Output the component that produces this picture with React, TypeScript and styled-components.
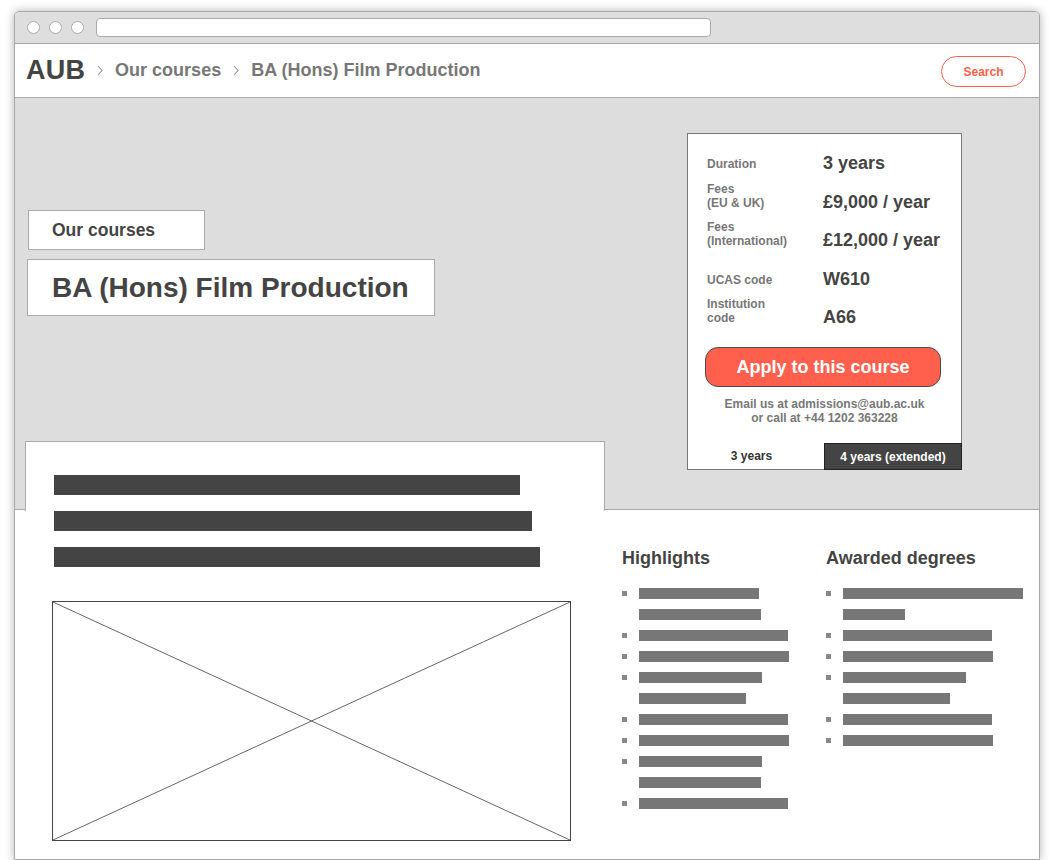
import React from "react";
import styled, { createGlobalStyle } from "styled-components";

const Global = createGlobalStyle`
  html, body { margin: 0; padding: 0; background: #ffffff; }
  body { font-family: "Liberation Sans", Arial, sans-serif; overflow: hidden; }
  * { box-sizing: border-box; }
`;

const Window = styled.div`
  margin: 11px 0 0 14px;
  width: 1026px;
  height: 849px;
  border: 1px solid #a8a8a8;
  border-radius: 5px 5px 0 0;
  box-shadow: 0 0 10px rgba(0, 0, 0, 0.3);
  background: #ffffff;
  overflow: hidden;
  display: flex;
  flex-direction: column;
`;

const Chrome = styled.div`
  height: 32px;
  flex: none;
  background: #dedede;
  border-bottom: 1px solid #a8a8a8;
  display: flex;
  align-items: center;
  padding-left: 12px;
  gap: 9px;
`;

const Dot = styled.span`
  width: 13px;
  height: 13px;
  border-radius: 50%;
  background: #ffffff;
  border: 1px solid #aaaaaa;
`;

const AddressBar = styled.div`
  margin-left: 3px;
  width: 615px;
  height: 19px;
  background: #ffffff;
  border: 1px solid #aaaaaa;
  border-radius: 4px;
`;

const Header = styled.header`
  height: 54px;
  flex: none;
  border-bottom: 1px solid #a8a8a8;
  display: flex;
  align-items: center;
  justify-content: space-between;
  padding: 0 13px 0 11px;
`;

const Crumbs = styled.nav`
  display: flex;
  align-items: center;
  gap: 12px;
`;

const Logo = styled.span`
  font-size: 27px;
  font-weight: 700;
  color: #444444;
  letter-spacing: 0.2px;
`;

const CrumbLink = styled.span`
  font-size: 18px;
  font-weight: 700;
  color: #777777;
`;

const SearchButton = styled.button`
  width: 85px;
  height: 31px;
  border: 1px solid #ff5f4d;
  border-radius: 16px;
  background: #ffffff;
  color: #ff5f4d;
  font-family: inherit;
  font-size: 12px;
  font-weight: 700;
  padding: 0;
  margin-top: 2px;
`;

const Hero = styled.section`
  height: 412px;
  flex: none;
  background: #dddddd;
  border-bottom: 1px solid #a8a8a8;
  display: flex;
  justify-content: space-between;
  align-items: flex-start;
  padding: 0 77px 0 12px;
`;

const TitleCol = styled.div`
  margin-top: 112px;
  display: flex;
  flex-direction: column;
  align-items: flex-start;
  gap: 9px;
`;

const CrumbBox = styled.div`
  margin-left: 1px;
  width: 177px;
  height: 40px;
  background: #ffffff;
  border: 1px solid #aaaaaa;
  padding-left: 23px;
  display: flex;
  align-items: center;
  font-size: 17.5px;
  font-weight: 700;
  color: #444444;
`;

const TitleBox = styled.h1`
  margin: 0;
  width: 408px;
  height: 57px;
  background: #ffffff;
  border: 1px solid #aaaaaa;
  padding-left: 24px;
  display: flex;
  align-items: center;
  font-size: 28px;
  font-weight: 700;
  color: #444444;
`;

const Card = styled.aside`
  margin-top: 35px;
  width: 275px;
  height: 337px;
  background: #ffffff;
  border: 1px solid #777777;
  display: flex;
  flex-direction: column;
  padding-top: 21px;
`;

const InfoList = styled.dl`
  margin: 0;
  padding-left: 19px;
  display: flex;
  flex-direction: column;
  gap: 10px;
`;

const InfoRow = styled.div<{ $extra?: number }>`
  display: flex;
  align-items: flex-end;
  margin-top: ${(p) => p.$extra || 0}px;
`;

const Label = styled.dt`
  width: 116px;
  font-size: 12px;
  line-height: 14px;
  font-weight: 700;
  color: #777777;
`;

const Value = styled.dd`
  margin: 0;
  font-size: 18px;
  line-height: 16px;
  font-weight: 700;
  color: #444444;
`;

const ApplyButton = styled.button`
  align-self: flex-start;
  margin: 22px 0 0 17px;
  width: 236px;
  height: 40px;
  border: 1px solid #4a4a4a;
  border-radius: 13px;
  background: #ff5f4d;
  color: #ffffff;
  font-family: inherit;
  font-size: 18px;
  font-weight: 700;
  padding: 0;
`;

const Contact = styled.p`
  margin: 10px 0 0;
  text-align: center;
  font-size: 12px;
  line-height: 14px;
  font-weight: 700;
  color: #777777;
`;

const Tabs = styled.div`
  margin-top: auto;
  height: 26px;
  display: flex;
`;

const Tab = styled.div<{ $active?: boolean }>`
  flex: ${(p) => (p.$active ? "1" : "none")};
  width: ${(p) => (p.$active ? "auto" : "136px")};
  display: flex;
  align-items: center;
  justify-content: center;
  font-size: 12px;
  font-weight: 700;
  color: ${(p) => (p.$active ? "#ffffff" : "#333333")};
  background: ${(p) => (p.$active ? "#444444" : "#ffffff")};
  border: ${(p) => (p.$active ? "1px solid #222222" : "none")};
  margin: ${(p) => (p.$active ? "0 -1px -1px 0" : "0")};
  padding-right: ${(p) => (p.$active ? "0" : "9px")};
`;

const Content = styled.main`
  display: flex;
  align-items: flex-start;
`;

const Panel = styled.section`
  position: relative;
  margin: -69px 0 0 10px;
  width: 580px;
  height: 440px;
  background: #ffffff;
  padding: 34px 0 0 29px;
  display: flex;
  flex-direction: column;
  align-items: flex-start;
  gap: 16px;

  &::before {
    content: "";
    position: absolute;
    top: 0;
    left: 0;
    right: 0;
    height: 69px;
    border: 1px solid #aaaaaa;
    border-bottom: none;
    pointer-events: none;
  }
`;

const TextBar = styled.div<{ $w: number }>`
  width: ${(p) => p.$w}px;
  height: 20px;
  background: #444444;
`;

const ImageBox = styled.div`
  margin: 18px 0 0 -2px;
  width: 519px;
  height: 240px;
  border: 1px solid #444444;
  svg {
    display: block;
    width: 100%;
    height: 100%;
  }
`;

const Side = styled.div`
  margin-left: 17px;
  padding-top: 37px;
  display: grid;
  grid-template-columns: 204px 200px;
`;

const Heading = styled.h2`
  margin: 0 0 14px;
  font-size: 18px;
  line-height: 22px;
  font-weight: 700;
  color: #444444;
`;

const List = styled.ul`
  margin: 0;
  padding: 0;
  list-style: none;
`;

const Item = styled.li`
  height: 21px;
  display: flex;
  align-items: center;
  gap: 12px;
`;

const Bullet = styled.span<{ $show: boolean }>`
  width: 5px;
  height: 5px;
  margin-bottom: 1px;
  background: ${(p) => (p.$show ? "#888888" : "transparent")};
`;

const LineBar = styled.span<{ $w: number }>`
  width: ${(p) => p.$w}px;
  height: 11px;
  background: #777777;
`;

const Chevron = () => (
  <svg width="6" height="11" viewBox="0 0 6 11" aria-hidden="true">
    <polyline points="1,1 5,5.5 1,10" fill="none" stroke="#9a9a9a" strokeWidth="1.1" />
  </svg>
);

const highlights: [number, boolean][] = [
  [120, true], [122, false], [149, true], [150, true], [123, true], [107, false],
  [149, true], [150, true], [123, true], [122, false], [149, true],
];

const awarded: [number, boolean][] = [
  [180, true], [62, false], [149, true], [150, true], [123, true], [107, false],
  [149, true], [150, true],
];

const info: { label: string[]; value: string; extra?: number }[] = [
  { label: ["Duration"], value: "3 years" },
  { label: ["Fees", "(EU & UK)"], value: "£9,000 / year", extra: 1 },
  { label: ["Fees", "(International)"], value: "£12,000 / year" },
  { label: ["UCAS code"], value: "W610", extra: 13 },
  { label: ["Institution", "code"], value: "A66" },
];

export default function App() {
  return (
    <>
      <Global />
      <Window>
        <Chrome>
          <Dot />
          <Dot />
          <Dot />
          <AddressBar />
        </Chrome>
        <Header>
          <Crumbs>
            <Logo>AUB</Logo>
            <Chevron />
            <CrumbLink>Our courses</CrumbLink>
            <Chevron />
            <CrumbLink>BA (Hons) Film Production</CrumbLink>
          </Crumbs>
          <SearchButton>Search</SearchButton>
        </Header>
        <Hero>
          <TitleCol>
            <CrumbBox>Our courses</CrumbBox>
            <TitleBox>BA (Hons) Film Production</TitleBox>
          </TitleCol>
          <Card>
            <InfoList>
              {info.map((r) => (
                <InfoRow key={r.value} $extra={r.extra}>
                  <Label>
                    {r.label.map((l, i) => (
                      <React.Fragment key={l}>
                        {i > 0 && <br />}
                        {l}
                      </React.Fragment>
                    ))}
                  </Label>
                  <Value>{r.value}</Value>
                </InfoRow>
              ))}
            </InfoList>
            <ApplyButton>Apply to this course</ApplyButton>
            <Contact>
              Email us at admissions@aub.ac.uk
              <br />
              or call at +44 1202 363228
            </Contact>
            <Tabs>
              <Tab>3 years</Tab>
              <Tab $active>4 years (extended)</Tab>
            </Tabs>
          </Card>
        </Hero>
        <Content>
          <Panel>
            <TextBar $w={466} />
            <TextBar $w={478} />
            <TextBar $w={486} />
            <ImageBox>
              <svg viewBox="0 0 100 100" preserveAspectRatio="none" aria-hidden="true">
                <line x1="0" y1="0" x2="100" y2="100" stroke="#666666" strokeWidth="1" vectorEffect="non-scaling-stroke" />
                <line x1="100" y1="0" x2="0" y2="100" stroke="#666666" strokeWidth="1" vectorEffect="non-scaling-stroke" />
              </svg>
            </ImageBox>
          </Panel>
          <Side>
            <div>
              <Heading>Highlights</Heading>
              <List>
                {highlights.map(([w, b], i) => (
                  <Item key={i}>
                    <Bullet $show={b} />
                    <LineBar $w={w} />
                  </Item>
                ))}
              </List>
            </div>
            <div>
              <Heading>Awarded degrees</Heading>
              <List>
                {awarded.map(([w, b], i) => (
                  <Item key={i}>
                    <Bullet $show={b} />
                    <LineBar $w={w} />
                  </Item>
                ))}
              </List>
            </div>
          </Side>
        </Content>
      </Window>
    </>
  );
}
